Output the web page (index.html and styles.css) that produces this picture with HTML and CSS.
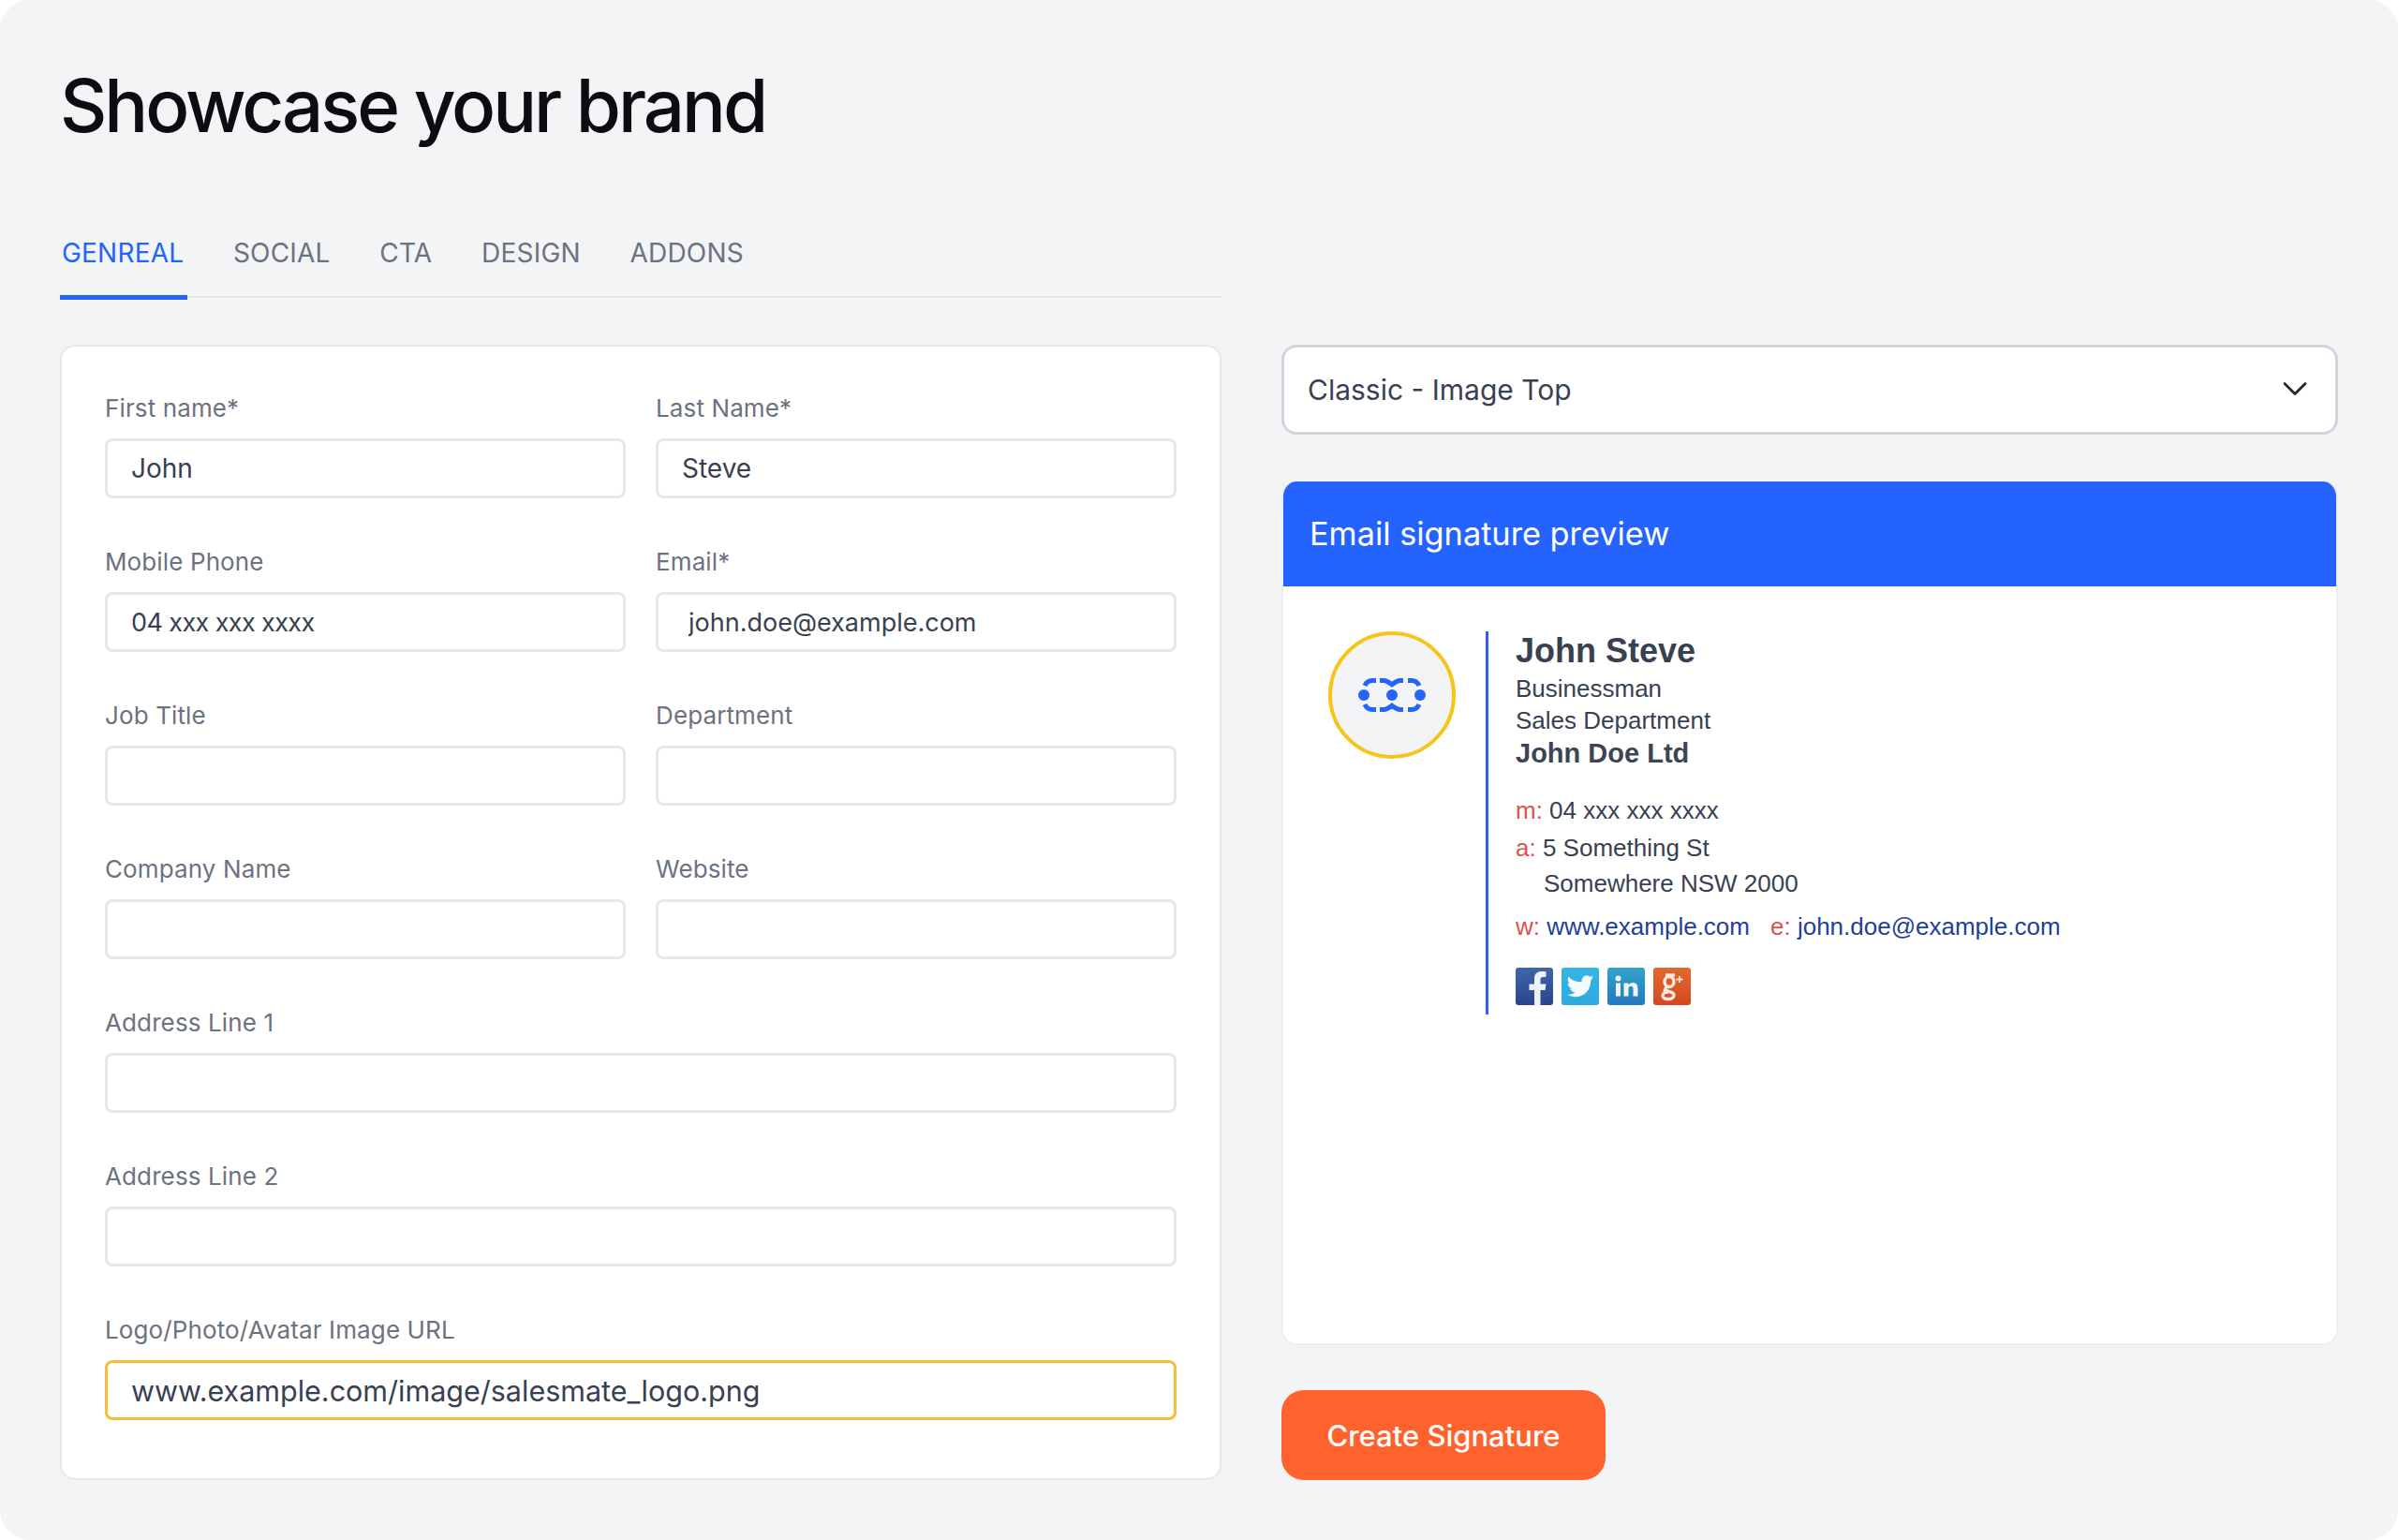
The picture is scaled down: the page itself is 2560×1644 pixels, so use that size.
FILE: index.html
```html
<!DOCTYPE html>
<html lang="en">
<head>
<meta charset="utf-8">
<title>Showcase your brand</title>
<link rel="stylesheet" href="styles.css">
</head>
<body>
<main class="page">
  <h1 class="title">Showcase your brand</h1>
  <div class="columns">
    <div class="left">
      <nav class="tabs">
        <a class="tab active">GENREAL</a>
        <a class="tab">SOCIAL</a>
        <a class="tab">CTA</a>
        <a class="tab">DESIGN</a>
        <a class="tab">ADDONS</a>
      </nav>
      <form class="form-card">
        <label class="field"><span class="label">First name*</span><input class="input" value="John"></label>
        <label class="field"><span class="label">Last Name*</span><input class="input" value="Steve"></label>
        <label class="field"><span class="label">Mobile Phone</span><input class="input input-phone" value="04 xxx xxx xxxx"></label>
        <label class="field"><span class="label">Email*</span><input class="input input-email" value="john.doe@example.com"></label>
        <label class="field"><span class="label">Job Title</span><input class="input"></label>
        <label class="field"><span class="label">Department</span><input class="input"></label>
        <label class="field"><span class="label">Company Name</span><input class="input"></label>
        <label class="field"><span class="label">Website</span><input class="input"></label>
        <label class="field wide"><span class="label">Address Line 1</span><input class="input"></label>
        <label class="field wide"><span class="label">Address Line 2</span><input class="input"></label>
        <label class="field wide"><span class="label">Logo/Photo/Avatar Image URL</span><input class="input input-focus" value="www.example.com/image/salesmate_logo.png"></label>
      </form>
    </div>
    <div class="right">
      <div class="select">
        <span>Classic - Image Top</span>
        <svg class="chevron" viewBox="0 0 26 16" fill="none" stroke="#1f2937" stroke-width="2.8" stroke-linecap="round" stroke-linejoin="round"><path d="M2 2.5 13 13.5 24 2.5"/></svg>
      </div>
      <section class="preview">
        <header class="preview-head">Email signature preview</header>
        <div class="preview-body">
          <div class="sig">
            <div class="logo">
              <svg viewBox="0 0 72 36" width="72" height="36" fill="none">
                <g stroke="#2563ff" stroke-width="5">
                  <path d="M7 8C8.500 4.500 11 2.500 15 2.500H19"/>
                  <path d="M7 28C8.500 31.500 11 33.500 15 33.500H19"/>
                  <path d="M23 2.500H28C31 3 33.500 5 36 6.800C38.500 5 41 3 44 2.500H48"/>
                  <path d="M23 33.500H28C31 33 33.500 31 36 29.200C38.500 31 41 33 44 33.500H48"/>
                  <path d="M53 2.500H57C61 2.500 63.500 4.500 65 8"/>
                  <path d="M53 33.500H57C61 33.500 63.500 31.500 65 28"/>
                </g>
                <g fill="#2563ff">
                  <circle cx="6" cy="18" r="6"/>
                  <circle cx="36" cy="18" r="6"/>
                  <circle cx="66" cy="18" r="6"/>
                </g>
              </svg>
            </div>
            <div class="sig-text">
              <div class="sig-name">John Steve</div>
              <div class="sig-line">Businessman</div>
              <div class="sig-line">Sales Department</div>
              <div class="sig-company">John Doe Ltd</div>
              <div class="sig-contact"><span class="key">m:</span> 04 xxx xxx xxxx</div>
              <div class="sig-contact sig-address"><span class="key">a:</span> 5 Something St<br><span class="indent">Somewhere NSW 2000</span></div>
              <div class="sig-contact sig-links"><span class="key">w:</span> <a>www.example.com</a><span class="key key-e">e:</span> <a>john.doe@example.com</a></div>
              <div class="social">
                <svg class="soc" viewBox="0 0 40 40"><defs><linearGradient id="fb" x1="0" y1="0" x2="0" y2="1"><stop offset="0" stop-color="#3f66ad"/><stop offset="1" stop-color="#2b4488"/></linearGradient></defs><rect width="40" height="40" rx="3" fill="url(#fb)"/><path d="M20 40V24h-5.500v-6.500H20v-6C20 6.500 23 4 28 4c2 0 3.500.2 4.500.3V10h-3c-2.300 0-3 1-3 3v4.500h6l-1 6.500h-5V40z" fill="#eef1f8"/></svg>
                <svg class="soc" viewBox="0 0 40 40"><defs><linearGradient id="tw" x1="0" y1="0" x2="0" y2="1"><stop offset="0" stop-color="#35b5e6"/><stop offset="1" stop-color="#2fa9e0"/></linearGradient></defs><rect width="40" height="40" rx="3" fill="url(#tw)"/><path d="M34 10.500c-1 .5-2 .8-3 1 1-.7 2-1.700 2.400-3-1 .6-2.200 1-3.300 1.300-2.500-2.800-8.500-1.500-8.500 4.200v1C15.500 15.500 10.500 13.200 7.500 9.500c-1.500 2.600-.8 6 1.800 7.700-1 0-1.800-.3-2.600-.7 0 2.800 2 5.200 4.700 5.700-.8.200-1.700.3-2.500.1.800 2.300 3 4 5.500 4-2.500 2-5.500 2.800-8.400 2.500 10 6 25 1 25.300-15.500 1.100-.8 2-1.700 2.700-2.800z" fill="#f5fbfe"/></svg>
                <svg class="soc" viewBox="0 0 40 40"><defs><linearGradient id="li" x1="0" y1="0" x2="0" y2="1"><stop offset="0" stop-color="#35a4cc"/><stop offset="1" stop-color="#2277bd"/></linearGradient></defs><rect width="40" height="40" rx="3" fill="url(#li)"/><g fill="#eef6fb"><circle cx="11.500" cy="11.500" r="3"/><rect x="9" y="16.500" width="5" height="14"/><path d="M17.500 16.500h4.800v2c1-1.500 2.600-2.400 4.700-2.400 3.800 0 5.500 2.300 5.500 6.400v8h-5v-7.500c0-2-.7-3.200-2.400-3.200s-2.600 1.200-2.600 3.200v7.500h-5z"/></g></svg>
                <svg class="soc" viewBox="0 0 40 40"><defs><linearGradient id="gp" x1="0" y1="0" x2="0" y2="1"><stop offset="0" stop-color="#e4682f"/><stop offset="1" stop-color="#d1491f"/></linearGradient></defs><rect width="40" height="40" rx="3" fill="url(#gp)"/><g fill="none" stroke="#fbe7dd" stroke-width="3.400"><ellipse cx="17" cy="15" rx="5" ry="5.500"/><path d="M23 8H13M14 20.500 12.500 24c5 1.500 10 2.500 9.500 5.500 0 2.500-3 4-6 4s-6-1-6-3.500c0-2.500 3-4 6-4"/></g><path d="M28 9v7M24.500 12.500h7" stroke="#fbe7dd" stroke-width="1.800"/></svg>
              </div>
            </div>
          </div>
        </div>
      </section>
      <button class="create" type="button">Create Signature</button>
    </div>
  </div>
</main>
</body>
</html>
```
FILE: styles.css
```css
* { box-sizing: border-box; }
html, body { margin: 0; padding: 0; background: #ffffff; }
body { width: 2560px; height: 1644px; font-family: "Inter", "Noto Sans", sans-serif; overflow: hidden; }
.page { width: 2560px; height: 1644px; background: #f3f4f6; border-radius: 32px; padding: 65px 64px 0; }
.title { margin: 0; font-size: 78px; line-height: 96px; font-weight: 500; color: #0b0d10; letter-spacing: -3.050px; height: 96px; }
.columns { display: grid; grid-template-columns: 1240px 1128px; column-gap: 64px; margin-top: 67px; }
.left, .right { display: flex; flex-direction: column; }
.right { margin-top: 140px; }
.tabs { display: flex; gap: 52.700px; height: 90px; border-bottom: 2px solid #e5e7eb; padding-left: 2px; margin-bottom: 50px; }
.tab { height: 90px; padding-top: 24px; font-size: 28px; line-height: 36px; color: #6b7280; position: relative; letter-spacing: 0.2px; }
.tab.active { color: #2563ff; }
.tab.active::after { content: ""; position: absolute; left: -2px; right: -4px; bottom: -2px; height: 5px; background: #2563ff; }
.form-card { background: #fff; border: 2px solid #e5e7eb; border-radius: 16px; padding: 46px 46px 62px; display: grid; grid-template-columns: 556px 556px; column-gap: 32px; row-gap: 0; height: 1212px; align-content: start; }
.field { display: flex; flex-direction: column; height: 164px; }
.wide { grid-column: 1 / -1; }
.label { font-size: 26px; line-height: 36px; color: #6b7280; height: 52px; padding-top: 2px; letter-spacing: 0.12px; }
.input { height: 64px; width: 100%; border: 3px solid #e5e7eb; border-radius: 8px; background: #fff; padding: 0 25px; font-family: inherit; font-size: 28px; color: #374151; outline: none; }
.input-phone { font-size: 27px; letter-spacing: -0.6px; }
.input-email { padding-left: 32px; font-size: 27px; }
.input-focus { border-color: #f6bd3c; font-size: 30.500px; }
.select { height: 96px; background: #fff; border: 3px solid #d1d5db; border-radius: 16px; display: flex; align-items: center; justify-content: space-between; padding: 0 30px 0 25px; font-size: 30px; color: #374151; }
.chevron { width: 26px; height: 16px; margin-bottom: 3px; }
.preview { margin-top: 50px; height: 922px; background: #fff; border-radius: 16px; border: 2px solid #eceef1; border-top: 0; overflow: hidden; }
.preview-head { height: 112px; background: #2563ff; color: #fff; font-size: 34.300px; line-height: 112px; padding-left: 30px; margin: 0 -2px; }
.preview-body { padding: 48px 48px 0 48px; }
.sig { display: flex; align-items: flex-start; }
.logo { width: 136px; height: 136px; border-radius: 50%; background: #f3f4f6; border: 4.500px solid #f5c518; display: flex; align-items: center; justify-content: center; flex: none; margin-right: 32px; }
.sig-text { border-left: 3px solid #2d62e0; padding-left: 29px; height: 409px; font-family: "Liberation Sans", Arial, sans-serif; color: #374151; font-size: 26px; line-height: 34px; }
.sig-name { font-size: 36px; font-weight: 700; line-height: 42px; margin-bottom: 2px; }
.sig-line { line-height: 34px; }
.sig-company { font-size: 29px; font-weight: 700; line-height: 34px; margin-top: 1px; color: #3b4553; }
.sig-contact { line-height: 38px; }
.key { color: #d9534f; }
.sig-contact:nth-child(5) { margin-top: 25px; }
.sig-address { margin-top: 2px; }
.indent { padding-left: 30px; }
.sig-links { margin-top: 8px; }
.sig-links a { color: #22409a; }
.key-e { margin-left: 22px; }
.social { display: flex; gap: 9px; margin-top: 25px; }
.soc { width: 40px; height: 40px; }
.create { margin-top: 48px; width: 346px; height: 96px; border: 0; border-radius: 24px; background: #ff622d; color: #fff; font-family: inherit; font-size: 31px; font-weight: 500; }
```
